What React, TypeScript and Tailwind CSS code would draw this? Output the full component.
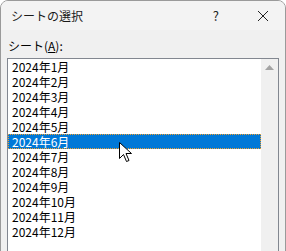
import React from "react";

const months = Array.from({ length: 12 }, (_, i) => `2024年${i + 1}月`);

export default function App() {
  return (
    <div
      className="relative w-[286px] h-[251px] overflow-hidden bg-white"
      style={{ fontFamily: '"Noto Sans CJK JP", "Noto Sans", sans-serif' }}
    >
      <div className="w-[286px] h-[260px] rounded-t-[8px] border border-[#9a9a9a] bg-[#f0f0f0] overflow-hidden flex flex-col">
        <div className="h-[29px] bg-[#f3f3f3] flex items-center shrink-0">
          <span className="ml-[10px] text-[12px] text-[#1a1a1a] leading-none">シートの選択</span>
          <span className="ml-auto mr-[38px] text-[13px] text-[#222] leading-none">?</span>
          <svg width="12" height="12" viewBox="0 0 12 12" className="mr-[16px]">
            <path d="M1 1 L11 11 M11 1 L1 11" stroke="#222" strokeWidth="1" />
          </svg>
        </div>
        <div className="flex flex-col px-[6px] pt-[9px]">
          <div className="text-[12px] leading-[14px] text-black ml-[1px]">
            シート(<span className="underline">A</span>):
          </div>
          <div className="mt-[5px] h-[220px] border border-[#828790] bg-white flex">
            <div className="flex-1 flex flex-col">
              {months.map((m, i) =>
                i === 5 ? (
                  <div
                    key={m}
                    className="h-[15px] overflow-hidden bg-[#0078d7] text-white text-[12px] leading-[13px] pl-[3px] border border-dotted border-[#f0a030]"
                  >
                    {m}
                  </div>
                ) : (
                  <div key={m} className="h-[15px] overflow-hidden text-black text-[12px] leading-[15px] pl-[4px]">
                    {m}
                  </div>
                )
              )}
            </div>
            <div className="w-[17px] bg-[#f0f0f0] flex justify-center pt-[6px]">
              <svg width="9" height="5" viewBox="0 0 9 5">
                <path d="M0 5 L4.5 0 L9 5 Z" fill="#a3a3a3" />
              </svg>
            </div>
          </div>
        </div>
      </div>
      <svg
        className="absolute left-[119px] top-[142px]"
        width="14"
        height="22"
        viewBox="0 0 14 22"
      >
        <path
          d="M0.5 0.5 L0.5 16.5 L4.5 12.5 L7.5 19.5 L10 18.5 L7 11.5 L12.5 11.5 Z"
          fill="white"
          stroke="black"
          strokeWidth="1"
          strokeLinejoin="round"
        />
      </svg>
    </div>
  );
}
